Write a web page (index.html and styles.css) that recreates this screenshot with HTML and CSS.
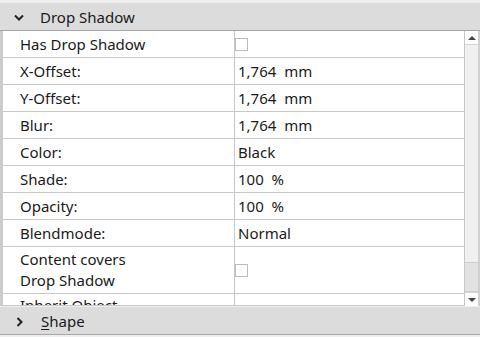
FILE: index.html
```html
<!DOCTYPE html>
<html lang="en">
<head>
    <meta charset="UTF-8">
    <title>Drop Shadow</title>
    <link rel="stylesheet" href="styles.css">
</head>
<body>
    <div class="panel">
        <div class="section-header">
            <svg class="chevron" width="10" height="7" viewBox="0 0 10 7">
                <path d="M1 1.5 L5 5.5 L9 1.5" fill="none" stroke="#222" stroke-width="2"/>
            </svg>
            <span>Drop Shadow</span>
        </div>
        <div class="table-area">
            <div class="rows">
                <div class="row">
                    <div class="cell-name">Has Drop Shadow</div>
                    <div class="cell-value"><span class="checkbox"></span></div>
                </div>
                <div class="row">
                    <div class="cell-name">X-Offset:</div>
                    <div class="cell-value">1,764&nbsp; mm</div>
                </div>
                <div class="row">
                    <div class="cell-name">Y-Offset:</div>
                    <div class="cell-value">1,764&nbsp; mm</div>
                </div>
                <div class="row">
                    <div class="cell-name">Blur:</div>
                    <div class="cell-value">1,764&nbsp; mm</div>
                </div>
                <div class="row">
                    <div class="cell-name">Color:</div>
                    <div class="cell-value">Black</div>
                </div>
                <div class="row">
                    <div class="cell-name">Shade:</div>
                    <div class="cell-value">100&nbsp; %</div>
                </div>
                <div class="row">
                    <div class="cell-name">Opacity:</div>
                    <div class="cell-value">100&nbsp; %</div>
                </div>
                <div class="row">
                    <div class="cell-name">Blendmode:</div>
                    <div class="cell-value">Normal</div>
                </div>
                <div class="row tall">
                    <div class="cell-name">Content covers<br>Drop Shadow</div>
                    <div class="cell-value"><span class="checkbox"></span></div>
                </div>
                <div class="row last">
                    <div class="cell-name">Inherit Object</div>
                    <div class="cell-value"></div>
                </div>
            </div>
            <div class="scrollbar">
                <div class="scroll-btn"><span class="arrow-up"></span></div>
                <div class="scroll-track">
                    <div class="scroll-thumb"></div>
                </div>
                <div class="scroll-btn"><span class="arrow-down"></span></div>
            </div>
            <div class="outer-edge"></div>
        </div>
        <div class="section-header closed">
            <svg class="chevron" width="7" height="10" viewBox="0 0 7 10">
                <path d="M1.5 1 L5.5 5 L1.5 9" fill="none" stroke="#222" stroke-width="2"/>
            </svg>
            <span><u>S</u>hape</span>
        </div>
    </div>
</body>
</html>
```

FILE: styles.css
```css
html, body {
    margin: 0;
    height: 337px;
    overflow: hidden;
}
body {
    font-family: "Noto Sans", "Open Sans", sans-serif;
    font-size: 15px;
    color: #1a1a1a;
    background-color: #efefef;
}
.panel {
    padding-top: 3px;
    width: 480px;
}
.section-header {
    background-color: #dcdcdc;
    border-bottom: 1px solid #a6a6a6;
    display: flex;
    align-items: center;
    box-sizing: border-box;
    height: 28px;
}
.section-header.closed {
    margin-top: 1px;
}
.section-header .chevron {
    margin-left: 14px;
    margin-right: 16px;
    margin-top: 2px;
}
.section-header.closed .chevron {
    margin-left: 16px;
    margin-right: 18px;
}
.section-header u {
    text-decoration-thickness: 1px;
    text-underline-offset: 2px;
}
.table-area {
    display: flex;
    height: 275px;
    overflow: hidden;
}
.rows {
    width: 462px;
    border-left: 3px solid #cbcbcb;
    background-color: #fff;
}
.row {
    display: flex;
    height: 26px;
    border-bottom: 1px solid #c8c8c8;
}
.row.tall {
    height: 46px;
}
.row.last {
    height: 11px;
    overflow: hidden;
    align-items: flex-start;
}
.row.last .cell-name {
    align-items: flex-start;
    padding-top: 1px;
}
.cell-name {
    width: 214px;
    padding-left: 17px;
    border-right: 1px solid #c8c8c8;
    display: flex;
    align-items: center;
    line-height: 21px;
}
.cell-value {
    flex: 1;
    display: flex;
    align-items: center;
    padding-left: 3px;
}
.checkbox {
    width: 11px;
    height: 11px;
    border: 1px solid #bdbdbd;
    background-color: #fff;
    margin-left: -3px;
}
.scrollbar {
    width: 13px;
    display: flex;
    flex-direction: column;
    border-left: 1px solid #c8c8c8;
    background-color: #f0f0f0;
}
.scroll-btn {
    height: 13px;
    display: flex;
    justify-content: center;
    align-items: center;
    background-color: #fff;
}
.scroll-track {
    flex: 1;
    display: flex;
    flex-direction: column;
    justify-content: flex-end;
    border-top: 1px solid #d4d4d4;
    border-bottom: 1px solid #d4d4d4;
}
.scroll-thumb {
    height: 28px;
    background-color: #e2e2e2;
    border-top: 1px solid #cfcfcf;
    border-bottom: 1px solid #cfcfcf;
}
.arrow-up {
    border-left: 4px solid transparent;
    border-right: 4px solid transparent;
    border-bottom: 4px solid #444;
}
.arrow-down {
    border-left: 4px solid transparent;
    border-right: 4px solid transparent;
    border-top: 4px solid #444;
}
.outer-edge {
    width: 2px;
    background-color: #d0d0d0;
}
```
